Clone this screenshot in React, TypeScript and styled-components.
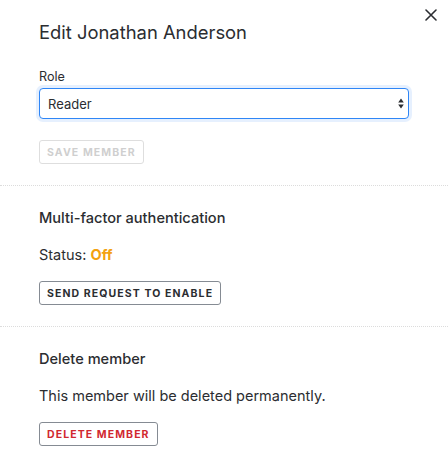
import React from "react";
import styled, { createGlobalStyle } from "styled-components";

const Global = createGlobalStyle`
  html, body { margin: 0; padding: 0; background: #fff; }
  body { font-family: Inter, "Noto Sans", sans-serif; color: #2b2d31; -webkit-font-smoothing: antialiased; }
  * { box-sizing: border-box; }
`;

const Panel = styled.div`
  position: relative;
  width: 448px;
  height: 461px;
  background: #fff;
  overflow: hidden;
`;

const Close = styled.button`
  position: absolute;
  top: 8px;
  right: 10px;
  width: 14px;
  height: 14px;
  padding: 0;
  border: 0;
  background: transparent;
  display: flex;
  align-items: center;
  justify-content: center;
  cursor: pointer;
`;

const Section = styled.section<{ $first?: boolean }>`
  display: flex;
  flex-direction: column;
  align-items: flex-start;
  padding: ${(p) => (p.$first ? "20px 39px 21px" : "22px 39px 21px")};
  border-bottom: 1px dotted #dcdcdc;
  &:last-child { border-bottom: 0; }
`;

const Title = styled.h1`
  margin: 0;
  font-size: 18.4px;
  line-height: 24px;
  font-weight: 400;
  color: #2b2d31;
`;

const Label = styled.label`
  margin-top: 25px;
  font-size: 12.6px;
  line-height: 16px;
  color: #2b2d31;
`;

const SelectWrap = styled.div`
  position: relative;
  margin-top: 3px;
  width: 100%;
`;

const Select = styled.select`
  appearance: none;
  -webkit-appearance: none;
  width: 100%;
  height: 31px;
  padding: 0 24px 0 8px;
  font-family: Inter, "Noto Sans", sans-serif;
  font-size: 13px;
  color: #2b2d31;
  background: #fff;
  border: 1px solid #2f86f6;
  border-radius: 4px;
  box-shadow: 0 0 0 3px rgba(47, 134, 246, 0.12);
  outline: none;
`;

const Arrows = styled.svg`
  position: absolute;
  right: 5px;
  top: 10px;
  pointer-events: none;
`;

const Button = styled.button<{ $tone?: "muted" | "danger" | "default" }>`
  margin-top: ${(p) => (p.$tone === "muted" ? "21px" : "16px")};
  height: 24px;
  padding: 0 7px;
  font-family: Inter, "Noto Sans", sans-serif;
  font-size: 10.5px;
  font-weight: 700;
  letter-spacing: 1.1px;
  text-transform: uppercase;
  background: #fff;
  border-radius: 3px;
  border: 1px solid ${(p) => (p.$tone === "muted" ? "#dedede" : "#858b93")};
  color: ${(p) =>
    p.$tone === "muted" ? "#cfcfcf" : p.$tone === "danger" ? "#d1282f" : "#2b2d31"};
  cursor: pointer;
`;

const Heading = styled.h2`
  margin: 0;
  font-size: 14.6px;
  line-height: 20px;
  font-weight: 500;
  color: #2b2d31;
`;

const Text = styled.p`
  margin: 17px 0 0;
  font-size: 14.5px;
  line-height: 20px;
  color: #2b2d31;
`;

const Off = styled.span`
  color: #f3a20f;
  font-weight: 700;
`;

export default function App() {
  return (
    <>
      <Global />
      <Panel>
        <Close aria-label="Close">
          <svg width="12" height="12" viewBox="0 0 12 12">
            <path d="M1 1L11 11M11 1L1 11" stroke="#2b2d31" strokeWidth="1.6" strokeLinecap="round" />
          </svg>
        </Close>
        <Section $first>
          <Title>Edit Jonathan Anderson</Title>
          <Label htmlFor="role">Role</Label>
          <SelectWrap>
            <Select id="role" defaultValue="Reader">
              <option>Reader</option>
              <option>Editor</option>
              <option>Admin</option>
            </Select>
            <Arrows width="6" height="11" viewBox="0 0 6 11">
              <path d="M3 0.5L5.8 4.5H0.2Z M3 10.5L5.8 6.5H0.2Z" fill="#2b2d31" />
            </Arrows>
          </SelectWrap>
          <Button $tone="muted" disabled>Save member</Button>
        </Section>
        <Section>
          <Heading>Multi-factor authentication</Heading>
          <Text>
            Status: <Off>Off</Off>
          </Text>
          <Button>Send request to enable</Button>
        </Section>
        <Section>
          <Heading>Delete member</Heading>
          <Text>This member will be deleted permanently.</Text>
          <Button $tone="danger">Delete member</Button>
        </Section>
      </Panel>
    </>
  );
}
